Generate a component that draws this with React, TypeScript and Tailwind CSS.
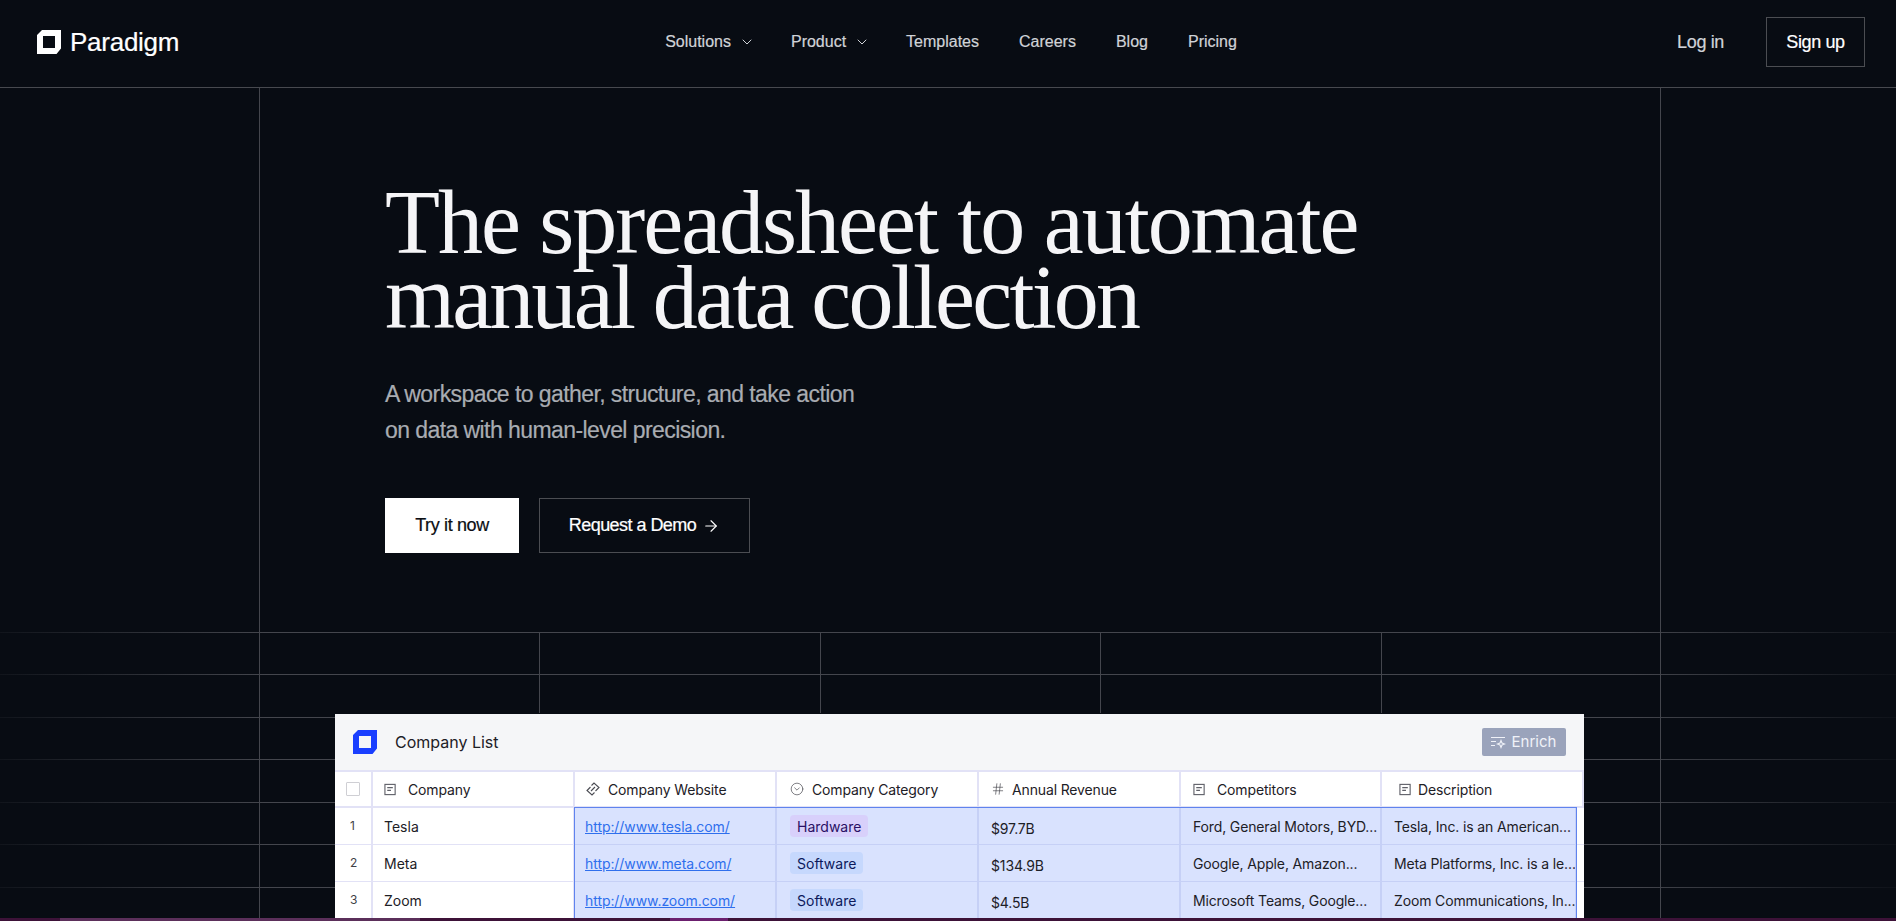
import React from 'react';
import { ArrowRight, ChevronDown, CircleChevronDown, Hash } from 'lucide-react';

const Logo: React.FC<{ className: string }> = ({ className }) => (
  <svg viewBox="0 0 24 24" className={className} fill="currentColor">
    <path fillRule="evenodd" d="M5 0H24V18.500L19.500 24H0V5ZM6 6V18H18V6Z" />
  </svg>
);

const DocIcon = () => (
  <svg viewBox="0 0 14 14" className="h-[13px] w-[13px] text-[#5f6068]" fill="none" stroke="currentColor" strokeWidth="1.2">
    <rect x="1" y="1.500" width="11" height="11" />
    <path d="M3.500 5H9.500M3.500 8H7.500" />
  </svg>
);

const LinkIcon = () => (
  <svg viewBox="0 0 14 14" className="h-[14px] w-[14px] text-[#4a4b52]" fill="none" stroke="currentColor" strokeWidth="1.1">
    <path d="M5.500 3.500 8 1l5 4.500-3.500 3.500M8.500 10.500 6 13 1 8.500 4.500 5M5 9l4-4" />
  </svg>
);

const EnrichIcon = () => (
  <svg viewBox="0 0 16 14" className="h-[14px] w-[16px]" fill="none" stroke="currentColor" strokeWidth="1.1">
    <path d="M1 2.500H15M1 6.500H6M1 10.500H5" />
    <path d="M11 5.500 12 8l2.500 1-2.500 1-1 2.500-1-2.500L7.500 9 10 8Z" />
  </svg>
);

const navItems = [
  { label: 'Solutions', menu: true },
  { label: 'Product', menu: true },
  { label: 'Templates' },
  { label: 'Careers' },
  { label: 'Blog' },
  { label: 'Pricing' },
];

const rows = [
  {
    n: 1,
    company: 'Tesla',
    url: 'http://www.tesla.com/',
    tag: 'Hardware',
    tagClass: 'bg-[#d8d0fb] text-[#2a1065]',
    revenue: '$97.7B',
    competitors: 'Ford, General Motors, BYD...',
    description: 'Tesla, Inc. is an American...',
  },
  {
    n: 2,
    company: 'Meta',
    url: 'http://www.meta.com/',
    tag: 'Software',
    tagClass: 'bg-[#c6d8fd] text-[#0c1a5c]',
    revenue: '$134.9B',
    competitors: 'Google, Apple, Amazon...',
    description: 'Meta Platforms, Inc. is a le...',
  },
  {
    n: 3,
    company: 'Zoom',
    url: 'http://www.zoom.com/',
    tag: 'Software',
    tagClass: 'bg-[#c6d8fd] text-[#0c1a5c]',
    revenue: '$4.5B',
    competitors: 'Microsoft Teams, Google...',
    description: 'Zoom Communications, In...',
  },
];

const lineYs = [632.5, 674.5, 717.5, 759.5, 802.5, 844.5, 887.5];
const innerXs = [539.5, 820.5, 1100.5, 1381.5];

// background lines behind the hero and the table
const GridLines = () => (
  <svg className="absolute left-0 top-0 h-[921px] w-[1896px]" viewBox="0 0 1896 921" fill="none" shapeRendering="crispEdges">
    <defs>
      <linearGradient id="fade" gradientUnits="userSpaceOnUse" x1="0" y1="0" x2="1896" y2="0">
        <stop offset="0" stopColor="#44464d" stopOpacity="0.15" />
        <stop offset="0.14" stopColor="#44464d" />
        <stop offset="0.86" stopColor="#44464d" />
        <stop offset="1" stopColor="#44464d" stopOpacity="0.1" />
      </linearGradient>
    </defs>
    {lineYs.map((y) => (
      <rect key={y} x="0" y={y - 0.5} width="1896" height="1" fill="url(#fade)" />
    ))}
    <path d="M259.500 88V918M1660.500 88V918" stroke="#44464d" />
    {innerXs.map((x) => (
      <path key={x} d={`M${x} 632V713`} stroke="#44464d" />
    ))}
  </svg>
);

const gridCols = 'grid grid-cols-[38px_202px_202px_202px_202px_201px_195px_7px]';
const head = 'flex items-center border-r-2 border-[#e2e2f6] text-[14px] tracking-[-0.01em] text-[#1d2026] h-full';
const cell = 'flex items-center h-[37px] border-r-2 border-b border-[#c6d0f6] bg-[#d9e2fe] text-[14px] tracking-[-0.01em] text-[#1d2026] whitespace-nowrap overflow-hidden';

const CompanyTable = () => (
  <div className="relative ml-[335px] h-[205px] w-[1249px] shrink-0 bg-white font-['Inter',sans-serif]">
    <div className="flex h-[56px] items-center justify-between bg-[#f5f6f8] px-[18px]">
      <div className="flex items-center gap-[18px]">
        <Logo className="h-6 w-6 text-[#1a3fff]" />
        <span className="text-[16px] text-[#1d2026]">Company List</span>
      </div>
      <button className="flex h-[28px] w-[84px] items-center justify-center gap-[6px] rounded-[2px] bg-[#9aa3bb] pr-[2px] text-[15px] text-[#f0f2f8]">
        <EnrichIcon />
        Enrich
      </button>
    </div>

    <div className={`${gridCols} h-[38px] items-stretch border-y-2 border-[#e2e2f6]`}>
      <div className={`${head} pl-[11px]`}>
        <span className="h-[14px] w-[14px] rounded-[1px] border border-[#cfcfd4]" />
      </div>
      <div className={`${head} gap-[11px] pl-[11px]`}><DocIcon />Company</div>
      <div className={`${head} gap-[8px] pl-[11px]`}><LinkIcon />Company Website</div>
      <div className={`${head} gap-[8px] pl-[13px]`}><CircleChevronDown size={14} strokeWidth={1.2} className="text-[#4a4b52]" />Company Category</div>
      <div className={`${head} gap-[7px] pl-[12px]`}><Hash size={14} strokeWidth={1.2} className="text-[#4a4b52]" />Annual Revenue</div>
      <div className={`${head} gap-[11px] pl-[12px]`}><DocIcon />Competitors</div>
      <div className={`${head} col-span-2 gap-[6px] border-r-0 pl-[17px]`}><DocIcon />Description</div>
    </div>

    <div className="relative">
      {rows.map((r) => (
        <div key={r.n} className={gridCols}>
          <div className="flex h-[37px] items-center border-r-2 border-b border-[#e2e2f6] pl-[15px] text-[12px] text-[#3f3f46]">{r.n}</div>
          <div className="flex h-[37px] items-center border-r-2 border-b border-[#e2e2f6] pl-[11px] text-[14px] text-[#1d2026]">{r.company}</div>
          <div className={`${cell} pl-[10px]`}>
            <a className="tracking-[-0.005em] text-[#2f6fed] underline">{r.url}</a>
          </div>
          <div className={`${cell} pl-[13px]`}>
            <span className={`flex h-[22px] items-center rounded-[4px] px-[7px] tracking-normal ${r.tagClass}`}>{r.tag}</span>
          </div>
          <div className={`${cell} pl-[12px] pt-[4px]`}>{r.revenue}</div>
          <div className={`${cell} pl-[12px]`}>{r.competitors}</div>
          <div className={`${cell} border-r-0 pl-[12px]`}>{r.description}</div>
          <div className="h-[37px] border-b border-[#e2e2f6]" />
        </div>
      ))}
      {/* selected range outline */}
      <div className="pointer-events-none absolute bottom-0 left-[239px] right-[7px] top-[-1px] border border-b-0 border-[#5f83ee]" />
    </div>
  </div>
);

export default function App() {
  return (
    <div className="relative flex h-[921px] flex-col overflow-hidden bg-[#080c13] font-['Liberation_Sans',sans-serif]">
      <GridLines />

      <nav className="relative grid h-[88px] shrink-0 grid-cols-[1fr_auto_1fr] items-center border-b border-[#47494f] bg-[#080c13] px-[31px] pb-[3px] [-webkit-text-stroke:0.2px_currentColor]">
        <div className="flex items-center gap-[9px] pl-[6px] text-white">
          <Logo className="h-6 w-6" />
          <span className="text-[26px] tracking-[-0.01em]">Paradigm</span>
        </div>
        <div className="flex items-center gap-10 pl-[6px] text-[16px] text-[#d0d3d8]">
          {navItems.map((item) => (
            <span key={item.label} className="flex items-center gap-[8px]">
              {item.label}
              {item.menu && <ChevronDown size={16} strokeWidth={1.5} className="-mr-[4px]" />}
            </span>
          ))}
        </div>
        <div className="flex items-center justify-end gap-[42px] text-[18px] tracking-[-0.02em]">
          <span className="text-[#d0d3d8]">Log in</span>
          <button className="h-[50px] w-[99px] border border-[#4b4d52] text-white">Sign up</button>
        </div>
      </nav>

      <section className="relative shrink-0 pl-[385px] pt-[97px]">
        <h1 className="font-['Liberation_Serif',serif] text-[90px] font-normal leading-[75px] tracking-[-0.0225em] text-[#f5f5f7]">
          The spreadsheet to automate
          <br />
          <span className="tracking-[-0.031em]">manual data collection</span>
        </h1>
        <p className="mt-[41px] text-[23px] leading-[36px] tracking-[-0.025em] text-[#a9acb2] [-webkit-text-stroke:0.2px_currentColor]">
          A workspace to gather, structure, and take action
          <br />
          on data with human-level precision.
        </p>
        <div className="mt-[50px] flex gap-5 text-[18px] tracking-[-0.02em] [-webkit-text-stroke:0.2px_currentColor]">
          <button className="h-[55px] w-[134px] bg-white text-[#0b0d12]">Try it now</button>
          <button className="flex h-[55px] w-[211px] items-center justify-center gap-[6px] border border-[#4b4d52] tracking-[-0.03em] text-white">
            Request a Demo
            <ArrowRight size={18} strokeWidth={1.5} />
          </button>
        </div>
      </section>

      <div className="relative mt-[161px] flex min-h-0 flex-1 flex-col">
        <CompanyTable />
      </div>

      <div className="relative flex h-[3px] shrink-0 bg-[#3d1238]">
        <div className="ml-[60px] w-[360px] bg-[#5b2f5a]" />
        <div className="ml-[250px] w-[58px] bg-[#6b1f6e]" />
      </div>
    </div>
  );
}
